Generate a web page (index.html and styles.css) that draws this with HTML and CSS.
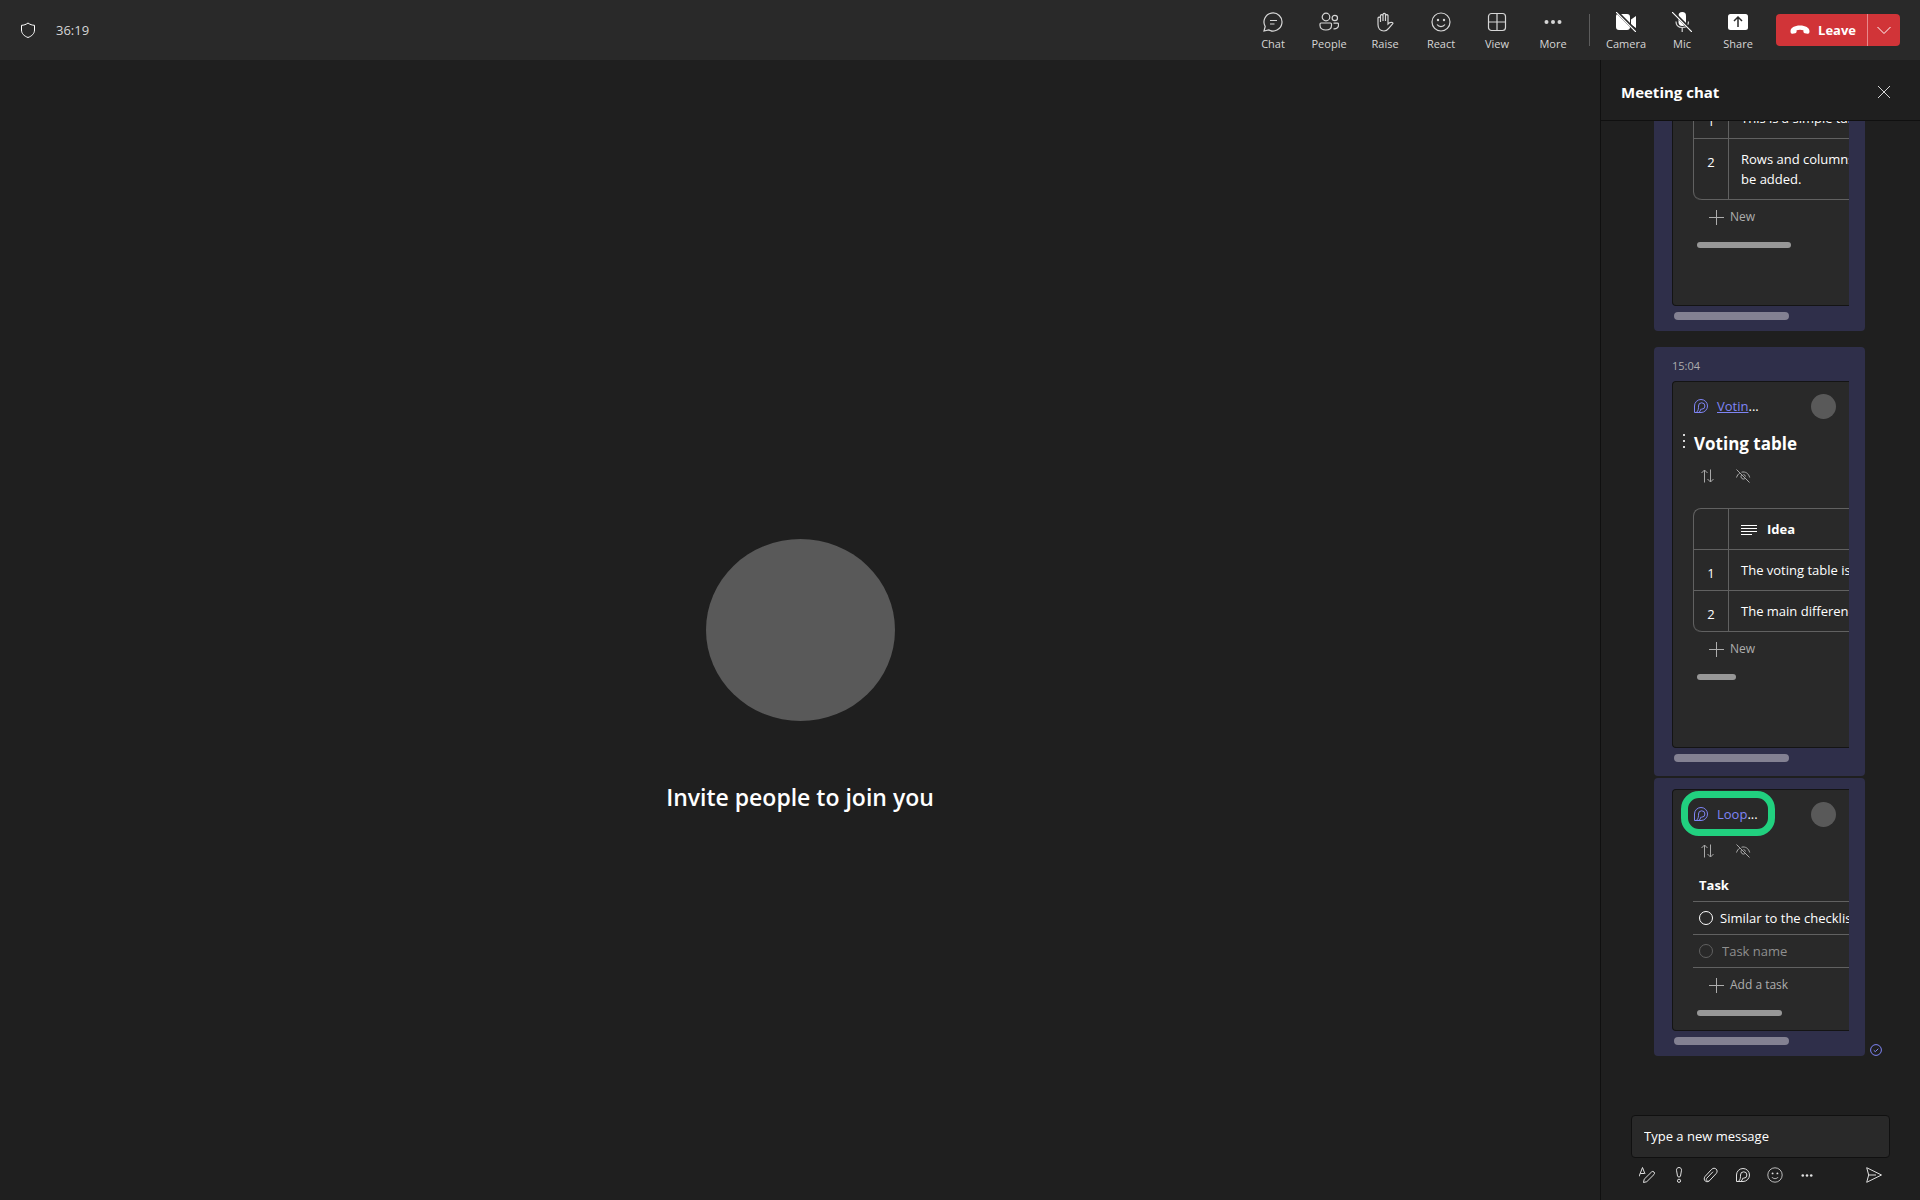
FILE: index.html
```html
<!DOCTYPE html>
<html lang="en">
<head>
<meta charset="utf-8">
<title>Meeting</title>
<link rel="stylesheet" href="styles.css">
</head>
<body>
  <svg class="symbols" aria-hidden="true">
    <symbol id="loop" viewBox="0 0 16 16">
      <path d="M1.500 14.500V8A6.500 6.500 0 1 1 8 14.500z"/>
      <path d="M3.500 14.300C5.500 12.500 5.500 10.500 5.500 8a3.200 3.200 0 1 1 3.200 3.200H7.800c-.3 1.300-.8 2.300-1.800 3.200"/>
    </symbol>
    <symbol id="sort" viewBox="0 0 16 16">
      <path d="M5.500 14.500V2M2.500 5l3-3 3 3M11.500 1.500V14M8.500 11l3 3 3-3"/>
    </symbol>
    <symbol id="hide" viewBox="0 0 16 16">
      <path d="M1.500 1.500l13 13M1.500 9.500c.7-2 1.700-3.500 3.300-4.400M6.500 4.200c4-1 7.200 1.300 8.200 5.300M6.400 7.200a2.500 2.500 0 0 0 3.400 3.500M8.500 6.500a2.500 2.500 0 0 1 2 2"/>
    </symbol>
    <symbol id="plus" viewBox="0 0 16 16">
      <path d="M8.500 1v15M1 8.500h15"/>
    </symbol>
    <symbol id="smile" viewBox="0 0 20 20">
      <circle cx="10" cy="10" r="9"/>
      <path d="M6 12.500c2 2.700 6 2.700 8 0"/>
      <circle class="solid" cx="7" cy="8" r="1.200"/>
      <circle class="solid" cx="13" cy="8" r="1.200"/>
    </symbol>
    <symbol id="dots" viewBox="0 0 20 20">
      <circle class="solid" cx="3.500" cy="10" r="2"/>
      <circle class="solid" cx="10" cy="10" r="2"/>
      <circle class="solid" cx="16.500" cy="10" r="2"/>
    </symbol>
  </svg>

  <header class="topbar">
    <svg class="icon shield" viewBox="0 0 16 16"><path d="M8 1c2 1.500 4 2.200 6.500 2.300V8c0 3.500-2.500 6-6.500 7.500C4 14 1.500 11.500 1.500 8V3.300C4 3.200 6 2.500 8 1z"/></svg>
    <span class="timer">36:19</span>
    <nav class="tools">
      <button class="tool">
        <svg class="icon" viewBox="0 0 20 20"><path d="M1 19l1.200-4.500A9 9 0 1 1 5.700 17.900zM7 8.500h7M7 12h4.500"/></svg>
        Chat
      </button>
      <button class="tool">
        <svg class="icon" viewBox="0 0 20 20"><circle cx="7" cy="5" r="3.800"/><circle cx="15.800" cy="6" r="2.700"/><path d="M2 11h9.500a1 1 0 0 1 1 1v1.500c0 3-2.500 4.500-5.700 4.500S1 16.500 1 13.500V12a1 1 0 0 1 1-1zM14.500 11.200h4a1 1 0 0 1 1 1v1c0 2.500-2 3.800-5 3.600"/></svg>
        People
      </button>
      <button class="tool">
        <svg class="icon" viewBox="0 0 20 20"><path d="M5.500 10V3.500a1.300 1.300 0 0 1 2.500 0V9M8 9V2.300a1.300 1.300 0 0 1 2.500 0V9M10.500 9V3.500a1.300 1.300 0 0 1 2.500 0V12c1.300-1.500 2.700-2 4.300-1.500.8.3.8.8.3 1.300l-3.900 4.500c-1.300 1.800-2.700 2.700-4.700 2.700-4 0-6-2.700-6-6.500V6a1.300 1.300 0 0 1 2.500 0v4"/></svg>
        Raise
      </button>
      <button class="tool">
        <svg class="icon"><use href="#smile"/></svg>
        React
      </button>
      <button class="tool">
        <svg class="icon" viewBox="0 0 20 20"><rect x="1.500" y="1.500" width="17" height="17" rx="3"/><path d="M10 1.500v17M1.500 10h17"/></svg>
        View
      </button>
      <button class="tool">
        <svg class="icon"><use href="#dots"/></svg>
        More
      </button>
      <span class="divider"></span>
      <button class="tool">
        <svg class="icon" viewBox="0 0 20 20"><path class="white" d="M0 4a2 2 0 0 1 2-2h9a3 3 0 0 1 3 3v10a3 3 0 0 1-3 3H3a3 3 0 0 1-3-3zM15 7.500L20 4v12l-5-3.500z"/><path class="gap" d="M1 0l19 19"/><path class="slash" d="M0 0l20 20"/></svg>
        Camera
      </button>
      <button class="tool">
        <svg class="icon" viewBox="0 0 20 20"><rect class="white" x="6.500" y="0" width="7.500" height="14" rx="3.700"/><path d="M4 9.500c0 4 2.500 6 6.200 6s6.300-2 6.300-6M10.200 15.500V20"/><path class="gap" d="M1 0l19 19"/><path class="slash" d="M0 0l20 20"/></svg>
        Mic
      </button>
      <button class="tool">
        <svg class="icon" viewBox="0 0 20 20"><rect class="white" x="0" y="2" width="20" height="16" rx="2.500"/><path class="cut" d="M10 15V5.500M6 9l4-4 4 4"/></svg>
        Share
      </button>
    </nav>
    <div class="leave">
      <button class="hangup">
        <svg class="phone" viewBox="0 0 20 10"><path d="M10 .5c5.500 0 9.500 2.300 9.500 5.700 0 1.800-.7 2.700-2 2.500l-2.700-.5c-1-.2-1.400-.8-1.400-1.700V5.200c-2-.7-4.800-.7-6.800 0v1.300c0 .9-.4 1.500-1.400 1.700l-2.700.5c-1.300.2-2-.7-2-2.500C.5 2.800 4.500.5 10 .5z"/></svg>
        Leave
      </button>
      <button class="leave_menu" aria-label="Leave options">
        <svg class="icon chevron" viewBox="0 0 16 16"><path d="M1.500 5L8 11.500 14.500 5"/></svg>
      </button>
    </div>
  </header>

  <div class="meeting">
    <main class="stage">
      <div class="person"></div>
      <h1>Invite people to join you</h1>
    </main>

    <aside class="chat">
      <div class="chat_head">
        <h2>Meeting chat</h2>
        <button class="plain" aria-label="Close">
          <svg class="icon close" viewBox="0 0 14 14"><path d="M1 1l12 12M13 1L1 13"/></svg>
        </button>
      </div>

      <div class="messages">
        <div class="message">
          <div class="bubble">
            <div class="component tail_mid">
              <table class="grid">
                <tr><th class="num">1</th><td>This is a simple table.</td></tr>
                <tr><th class="num">2</th><td>Rows and columns can<br>be added.</td></tr>
              </table>
              <button class="add"><svg class="icon"><use href="#plus"/></svg>New</button>
              <div class="thumb inner_wide"></div>
            </div>
            <div class="thumb outer"></div>
          </div>
        </div>

        <div class="message second">
          <div class="bubble tall">
            <time class="time">15:04</time>
            <div class="component tail_long">
              <div class="comp_head">
                <svg class="icon loop"><use href="#loop"/></svg>
                <span><a href="#voting">Votin</a>...</span>
                <span class="avatar"></span>
              </div>
              <div class="title_row">
                <button class="plain handle" aria-label="Move"><svg viewBox="0 0 4 16"><path d="M1 1h2v2H1zM1 7h2v2H1zM1 13h2v2H1z"/></svg></button>
                <h3 id="voting">Voting table</h3>
              </div>
              <div class="comp_tools spaced">
                <button class="plain" aria-label="Sort"><svg class="icon"><use href="#sort"/></svg></button>
                <button class="plain" aria-label="Hide"><svg class="icon"><use href="#hide"/></svg></button>
              </div>
              <table class="grid">
                <tr>
                  <th class="num"></th>
                  <th class="idea"><svg class="icon lines" viewBox="0 0 16 12"><path d="M0 1.500h16M0 4.500h16M0 7.500h16M0 10.500h11"/></svg>Idea</th>
                </tr>
                <tr><th class="num">1</th><td>The voting table is similar</td></tr>
                <tr><th class="num">2</th><td>The main difference is</td></tr>
              </table>
              <button class="add"><svg class="icon"><use href="#plus"/></svg>New</button>
              <div class="thumb inner_short"></div>
            </div>
            <div class="thumb outer"></div>
          </div>
        </div>

        <div class="message third">
          <div class="bubble">
            <div class="component tail_short">
              <div class="comp_head">
                <svg class="icon loop"><use href="#loop"/></svg>
                <span><a class="bare" href="#tasks">Loop</a>...</span>
                <span class="avatar"></span>
                <span class="highlight"></span>
              </div>
              <div class="comp_tools">
                <button class="plain" aria-label="Sort"><svg class="icon"><use href="#sort"/></svg></button>
                <button class="plain" aria-label="Hide"><svg class="icon"><use href="#hide"/></svg></button>
              </div>
              <table class="tasks" id="tasks">
                <tr><th>Task</th></tr>
                <tr><td><label><input type="checkbox">Similar to the checklist</label></td></tr>
                <tr><td class="blank"><div><input type="checkbox" aria-label="Done" disabled><input type="text" placeholder="Task name" aria-label="Task name"></div></td></tr>
              </table>
              <button class="add"><svg class="icon"><use href="#plus"/></svg>Add a task</button>
              <div class="thumb inner_mid"></div>
            </div>
            <div class="thumb outer"></div>
          </div>
          <svg class="icon sent" viewBox="0 0 12 12"><circle cx="6" cy="6" r="5.400"/><path d="M3.800 6.300l1.500 1.400 3-3"/></svg>
        </div>
      </div>

      <form class="compose">
        <input class="entry" type="text" placeholder="Type a new message" aria-label="Type a new message">
        <div class="compose_tools">
          <button type="button" class="plain" aria-label="Format"><svg class="icon" viewBox="0 0 16 16"><path d="M0 9.500L3.500.5 6 7M1.300 6.500h4M4.500 15.500l.7-3.300L12.500 5a1.700 1.700 0 0 1 2.500 2.500L7.800 14.700z"/></svg></button>
          <button type="button" class="plain" aria-label="Importance"><svg class="icon" viewBox="0 0 16 16"><path d="M8 .5c1.500 0 2.700 1.200 2.500 2.700L9.500 9c-.2 1.400-2.800 1.400-3 0l-1-5.800C5.300 1.700 6.500.5 8 .5z"/><circle cx="8" cy="13.800" r="1.600"/></svg></button>
          <button type="button" class="plain" aria-label="Attach"><svg class="icon" viewBox="0 0 16 16"><path d="M2 9.500l6.700-7.200c3-3 7.300 1 4.500 4.200L6.500 13.700c-1.800 1.700-4.300-.7-2.700-2.500L10 4.700M2 9.500c-2.500 3.500 1.500 7 4.500 4.200"/></svg></button>
          <button type="button" class="plain" aria-label="Loop components"><svg class="icon"><use href="#loop"/></svg></button>
          <button type="button" class="plain" aria-label="Emoji"><svg class="icon"><use href="#smile"/></svg></button>
          <button type="button" class="plain" aria-label="More options"><svg class="icon few"><use href="#dots"/></svg></button>
          <button class="plain send" aria-label="Send"><svg class="icon" viewBox="0 0 16 16"><path d="M.7.700L15.500 8 .7 15.300 2.700 8zM2.700 8H10"/></svg></button>
        </div>
      </form>
    </aside>
  </div>
</body>
</html>
```
FILE: styles.css
```css
* { box-sizing: border-box; }
body {
  background-color: #1f1f1f;
  color: #fff;
  display: flex;
  flex-direction: column;
  height: 100vh;
  margin: 0;
  overflow: hidden;
}
body, button, input {
  font-family: "Open Sans", "Noto Sans", sans-serif;
  font-size: 13px;
  line-height: 20px;
}
h1, h2, h3 { margin: 0; font-weight: 600; }
button {
  background: none;
  border: 0;
  color: inherit;
  cursor: pointer;
  padding: 0;
}
.symbols { display: none; }
.icon {
  display: block;
  fill: none;
  flex: none;
  height: 16px;
  stroke: currentColor;
  stroke-width: 1;
  width: 16px;
}
.solid { fill: currentColor; stroke: none; }

/* top bar */
.topbar {
  align-items: center;
  background-color: #292929;
  display: flex;
  flex: none;
  height: 60px;
  padding: 0 20px;
}
.shield { color: #fff; }
.timer {
  color: #d6d6d6;
  margin-left: 20px;
}
.tools {
  align-items: center;
  color: #d6d6d6;
  display: flex;
  margin-left: auto;
}
.tool {
  align-items: center;
  display: flex;
  flex-direction: column;
  font-size: 11px;
  gap: 4px;
  line-height: 16px;
  padding-top: 4px;
  width: 56px;
}
.tool .icon {
  height: 20px;
  stroke-width: 1.200px;
  width: 20px;
}
.tool .white { fill: #fff; stroke: none; }
.tool .gap { stroke: #292929; stroke-width: 3px; }
.tool .slash { stroke: #fff; }
.tool .cut { stroke: #292929; stroke-width: 1.500px; }
.divider {
  background-color: #5c5c5c;
  height: 32px;
  margin: 0 8px;
  width: 1px;
}
.leave {
  background-color: #d13438;
  border-radius: 4px;
  display: flex;
  height: 32px;
  margin-left: 10px;
}
.hangup {
  align-items: center;
  display: flex;
  font-weight: 700;
  gap: 8px;
  padding: 0 11px 0 14px;
}
.phone { fill: #fff; height: 10px; width: 20px; }
.leave_menu {
  border-left: 1px solid #e8888b;
  padding: 0 8px;
}

/* stage */
.meeting {
  display: flex;
  flex: 1;
  min-height: 0;
}
.stage {
  display: grid;
  flex: 1;
  grid-template-rows: 1fr auto 1fr;
  justify-items: center;
}
.person {
  background-color: #595959;
  border-radius: 50%;
  grid-row: 2;
  height: 182px;
  width: 189px;
}
h1 {
  font-size: 23px;
  grid-row: 3;
  line-height: 32px;
  margin-top: 60px;
}

/* chat panel */
.chat {
  border-left: 1px solid #101010;
  display: flex;
  flex: none;
  flex-direction: column;
  width: 320px;
}
.chat_head {
  align-items: center;
  border-bottom: 1px solid #101010;
  display: flex;
  flex: none;
  height: 61px;
  justify-content: space-between;
  padding: 4px 29px 0 20px;
}
h2 {
  font-size: 15px;
  font-weight: 700;
}
.close { height: 14px; width: 14px; color: #d6d6d6; }
.messages {
  display: flex;
  flex: 1;
  flex-direction: column;
  justify-content: flex-end;
  min-height: 0;
  overflow: hidden;
  padding: 0 0 59px 53px;
}
.message {
  align-items: end;
  display: grid;
  flex: none;
  gap: 5px;
  grid-template-columns: minmax(0, 1fr) 50px;
}
.second { margin-top: 16px; }
.third { margin-top: 2px; }
.bubble {
  background-color: #2f2f4a;
  border-radius: 4px;
  padding: 11px 16px 11px 18px;
}
.tall { padding-bottom: 14px; }
.time {
  color: #adadad;
  display: block;
  font-size: 11px;
  line-height: 16px;
  margin: 0 0 7px;
}
.sent {
  color: #7f85f5;
  height: 12px;
  width: 12px;
}
.component {
  background-color: #292929;
  border: 1px solid #141414;
  border-right: 0;
  border-radius: 4px 0 0 4px;
  overflow: hidden;
  padding-left: 20px;
}
.tail_short { padding-bottom: 14px; }
.tail_mid { padding-bottom: 57px; }
.tail_long { padding-bottom: 67px; }
.comp_head {
  align-items: center;
  display: flex;
  gap: 8px;
  height: 48px;
  padding-right: 13px;
  position: relative;
}
.comp_head a { color: #7f85f5; }
.comp_head .bare { text-decoration: none; }
.loop { color: #7f85f5; }
.avatar {
  background-color: #595959;
  border-radius: 50%;
  height: 25px;
  margin-left: auto;
  width: 25px;
}
/* ring drawn over the component name */
.highlight {
  border: 7px solid #21d07f;
  border-radius: 18px;
  height: 45px;
  left: -12px;
  position: absolute;
  top: 1px;
  width: 94px;
}
.title_row {
  align-items: flex-start;
  display: flex;
  gap: 8px;
  margin-left: -11px;
}
h3 {
  font-size: 17px;
  font-weight: 700;
  line-height: 28px;
  white-space: nowrap;
}
.handle svg {
  display: block;
  fill: #d6d6d6;
  height: 16px;
  margin-top: 3px;
  width: 4px;
}
.comp_tools {
  align-items: center;
  color: #a8a8a8;
  display: flex;
  gap: 20px;
  height: 26px;
  margin: 0 0 5px 6px;
}
.spaced { margin: 5px 0 19px 6px; }

table { border-spacing: 0; }
th, td {
  padding: 0;
  text-align: left;
  vertical-align: top;
  white-space: nowrap;
}
.grid {
  border: solid #616161;
  border-width: 1px 0 0 1px;
  border-radius: 8px 0 0 8px;
  table-layout: fixed;
  width: 300px;
}
.grid th, .grid td {
  border-bottom: 1px solid #616161;
  padding: 10px 12px;
}
.grid .num {
  border-right: 1px solid #616161;
  font-weight: 400;
  padding: 13px 0 7px;
  text-align: center;
  width: 35px;
}
.grid tr:last-child .num { border-bottom-left-radius: 8px; }
.grid .idea { font-weight: 700; }
.lines {
  display: inline-block;
  height: 12px;
  margin-right: 10px;
  vertical-align: -2px;
}
.add {
  align-items: center;
  color: #adadad;
  display: flex;
  font-size: 12px;
  gap: 6px;
  height: 34px;
  margin-left: 15px;
  white-space: nowrap;
}
.tasks { width: 300px; }
.tasks th, .tasks td {
  border-bottom: 1px solid #616161;
  height: 33px;
  padding: 0 0 0 6px;
  vertical-align: middle;
}
.tasks label, .tasks div {
  align-items: center;
  display: flex;
  gap: 7px;
}
.tasks input[type="checkbox"] {
  appearance: none;
  border: 1px solid #fff;
  border-radius: 50%;
  height: 14px;
  margin: 0;
  width: 14px;
}
.tasks .blank input[type="checkbox"] { border-color: #616161; }
.tasks input[type="text"] {
  background: none;
  border: 0;
  color: #fff;
  padding: 0 2px;
}
.tasks input::placeholder { color: #8f8f8f; }

/* scroll thumbs */
.thumb {
  background-color: #979797;
  border-radius: 4px;
  height: 6px;
  margin: 8px 0 0 4px;
}
.inner_short { width: 39px; }
.inner_mid { width: 85px; }
.inner_wide { width: 94px; }
.outer {
  background-color: #838192;
  height: 8px;
  margin: 6px 0 0 2px;
  width: 115px;
}

/* compose box */
.compose {
  flex: none;
  padding: 0 30px 12px;
}
.entry {
  background-color: #292929;
  border: 1px solid #101010;
  border-radius: 4px;
  color: #fff;
  display: block;
  height: 43px;
  padding: 0 12px 2px;
  width: 100%;
}
.entry::placeholder { color: #fff; opacity: 1; }
.compose_tools {
  align-items: center;
  color: #e0e0e0;
  display: flex;
  gap: 16px;
  height: 26px;
  margin: 4px 8px 0;
}
.few { height: 13px; }
.send { margin-left: auto; }
```
